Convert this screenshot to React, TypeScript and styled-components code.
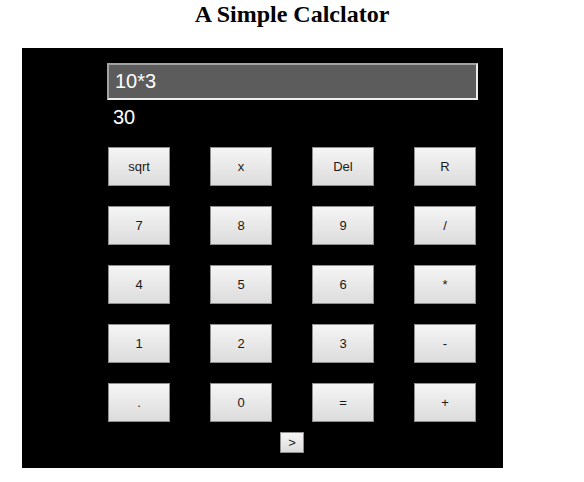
import React from "react";
import styled, { createGlobalStyle } from "styled-components";

const Global = createGlobalStyle`
  html, body { margin: 0; padding: 0; background: #ffffff; }
  body { width: 584px; height: 482px; overflow: hidden; }
`;

const Title = styled.h2`
  margin: 0;
  width: 584px;
  height: 28px;
  line-height: 28px;
  text-align: center;
  font-family: "Liberation Serif", serif;
  font-weight: bold;
  font-size: 24px;
  color: #000;
`;

const Panel = styled.div`
  margin: 20px 0 0 22px;
  width: 481px;
  height: 420px;
  background: #000;
  box-sizing: border-box;
  padding: 15px 0 0 85px;
  display: flex;
  flex-direction: column;
`;

const Screen = styled.div`
  box-sizing: border-box;
  width: 371px;
  height: 37px;
  background: #5c5c5c;
  border: 2px solid;
  border-color: #a3a3a3 #ececec #ececec #a3a3a3;
  padding-left: 6px;
  display: flex;
  align-items: center;
  font-family: "Liberation Sans", Arial, sans-serif;
  font-size: 20px;
  color: #fff;
`;

const Result = styled.div`
  height: 34px;
  padding-left: 6px;
  display: flex;
  align-items: center;
  font-family: "Liberation Sans", Arial, sans-serif;
  font-size: 20px;
  color: #fff;
`;

const Keys = styled.div`
  margin-top: 13px;
  margin-left: 1px;
  display: grid;
  grid-template-columns: repeat(4, 62px);
  grid-auto-rows: 39px;
  column-gap: 40px;
  row-gap: 20px;
`;

const Key = styled.button<{ $small?: boolean }>`
  box-sizing: border-box;
  width: ${(p) => (p.$small ? "24px" : "62px")};
  height: ${(p) => (p.$small ? "21px" : "39px")};
  margin: 0;
  padding: 0;
  border: 1px solid #8f8f8f;
  border-radius: 0;
  background: linear-gradient(to bottom, #f5f5f5, #dcdcdc);
  font-family: "Liberation Sans", Arial, sans-serif;
  font-size: 13px;
  color: #1a1a1a;
  display: flex;
  align-items: center;
  justify-content: center;
`;

const Footer = styled.div`
  margin-top: 10px;
  margin-left: 173px;
  display: flex;
`;

const keys = [
  "sqrt", "x", "Del", "R",
  "7", "8", "9", "/",
  "4", "5", "6", "*",
  "1", "2", "3", "-",
  ".", "0", "=", "+",
];

export default function App() {
  return (
    <>
      <Global />
      <Title>A Simple Calclator</Title>
      <Panel>
        <Screen>10*3</Screen>
        <Result>30</Result>
        <Keys>
          {keys.map((k) => (
            <Key key={k}>{k}</Key>
          ))}
        </Keys>
        <Footer>
          <Key $small>&gt;</Key>
        </Footer>
      </Panel>
    </>
  );
}
